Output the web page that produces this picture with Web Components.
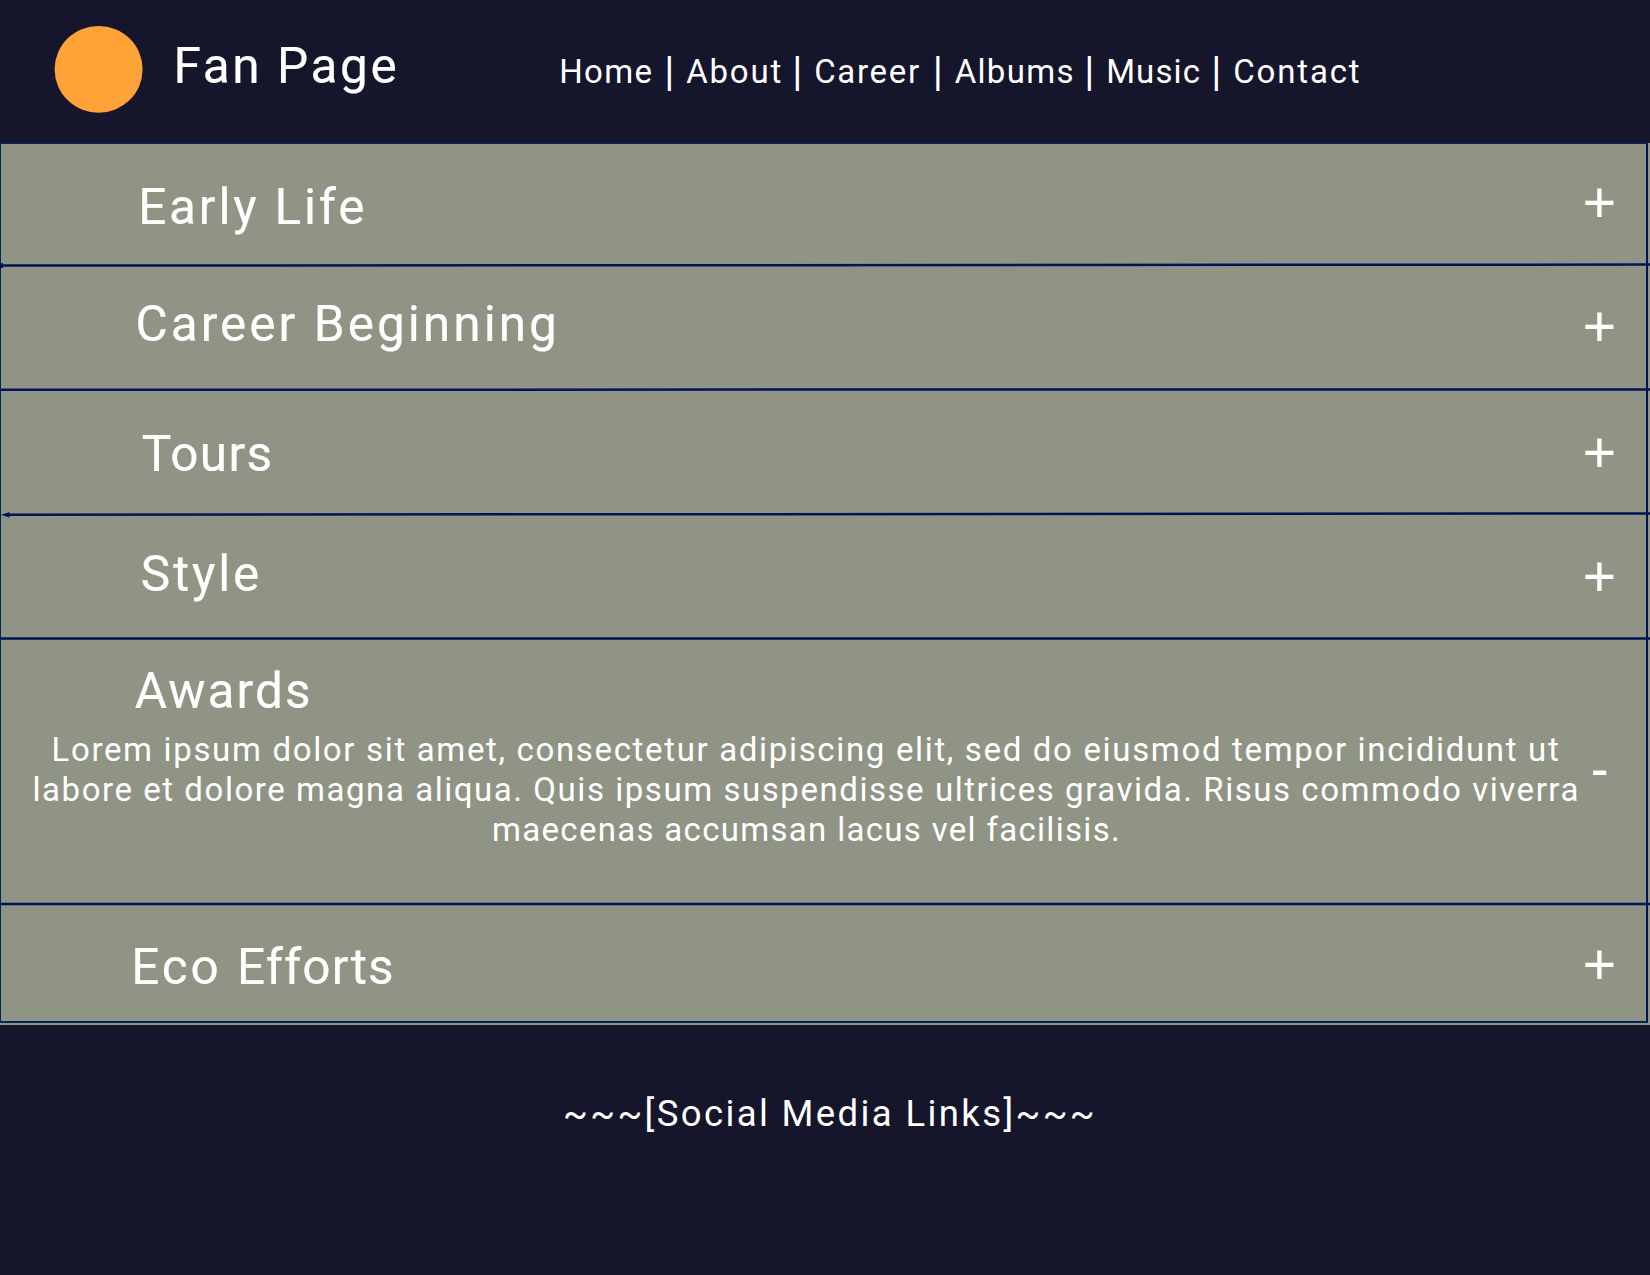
<!DOCTYPE html>
<html lang="en">
<head>
<meta charset="utf-8">
<title>Fan Page</title>
<style>
  body { margin: 0; background: #15152b; }
</style>
</head>
<body>
<fan-page></fan-page>
<script>
const define = (name, html, init) => customElements.define(name, class extends HTMLElement {
  connectedCallback() {
    if (this.shadowRoot) return;
    const t = document.createElement('template');
    t.innerHTML = html;
    this.attachShadow({ mode: 'open' }).append(t.content.cloneNode(true));
    if (init) init.call(this, this.shadowRoot);
  }
});

define('site-header', `
<style>
  :host { display: flex; align-items: flex-start; height: 143px; box-sizing: border-box; white-space: nowrap; }
  svg { width: 90px; height: 88px; margin: 25px 0 0 53px; flex: none; }
  .brand { margin: 37px 0 0 30.5px; width: 385.7px; font-size: 49.5px; line-height: 58px; letter-spacing: 2.6px; flex: none; -webkit-text-stroke: 0.2px #fff; }
  nav { display: flex; margin-top: 51px; font-size: 33px; line-height: 40px; }
</style>
<svg viewBox="0 0 90 88"><ellipse cx="45.6" cy="44.3" rx="44" ry="43.4" fill="#ffa238"/></svg>
<div class="brand"><slot name="brand"></slot></div>
<nav><slot></slot></nav>`);

define('nav-item', `
<style>
  :host { display: flex; justify-content: space-between; align-items: baseline; box-sizing: border-box; width: var(--w); padding-right: 12px; letter-spacing: var(--ls); }
  :host([last]) i { width: 0; overflow: hidden; }
  i { font: 37px/40px "Liberation Sans", sans-serif; letter-spacing: 0; width: 10px; text-align: center; }
</style>
<span><slot></slot></span><i></i>`, function (root) {
  root.querySelector('i').textContent = this.hasAttribute('last') ? '\u00a0' : '|';
  if (this.hasAttribute('last')) root.querySelector('i').style.overflow = 'visible';
});

/* Divider between rows: y1 / y2 give the line a slight slope, tip picks the left end. */
define('row-divider', `
<style>
  :host { display: block; height: 8px; margin-right: -5px; }
  svg { display: block; width: 1650px; height: 8px; overflow: visible; }
</style>
<svg viewBox="0 0 1650 8"></svg>`, function (root) {
  const a = this.getAttribute('y1'), b = this.getAttribute('y2'), tip = this.getAttribute('tip');
  root.querySelector('svg').innerHTML =
    `<line x1="${tip === 'arrow' ? 6 : 0}" y1="${a}" x2="1650" y2="${b}" stroke="#001457" stroke-width="2.5"/>` +
    (tip === 'arrow' ? `<path d="M0 ${a}L9 ${+a - 2.9}L7.5 ${a}L9 ${+a + 2.9}Z" fill="#001457"/>` : '') +
    (tip === 'dot' ? `<rect x="-1" y="${+a - 2.4}" width="3" height="4.8" fill="#001457"/>` : '');
});

define('accordion-row', `
<style>
  :host { display: flex; justify-content: space-between; box-sizing: border-box; height: var(--h); white-space: nowrap; }
  .main { flex: 1; min-width: 0; }
  h2 { margin: var(--ty) 0 0 var(--tx); font-weight: 400; font-size: 49.5px; line-height: 58px; letter-spacing: var(--ls); -webkit-text-stroke: 0.2px #fff; }
  .sign { flex: none; width: 60px; margin: var(--sy) 16.5px 0 0; text-align: center; font: 57px/60px "Liberation Sans", sans-serif; height: 60px; -webkit-text-stroke: 0.2px #fff; }
  :host([open]) .sign { font-size: 53px; }
</style>
<div class="main"><h2><slot name="title"></slot></h2><slot></slot></div>
<div class="sign"></div>`, function (root) {
  root.querySelector('.sign').textContent = this.hasAttribute('open') ? '-' : '+';
});

define('row-text', `
<style>
  :host { display: block; margin-top: 10px; font-size: 33px; line-height: 40px; }
  div { display: flex; }
  .a { padding-left: 50.5px; letter-spacing: 1.66px; }
  .b { padding-left: 31.5px; letter-spacing: 1.55px; }
  .c { padding-left: 491px; letter-spacing: 1.31px; }
</style>
<div class="a"><slot name="a"></slot></div>
<div class="b"><slot name="b"></slot></div>
<div class="c"><slot name="c"></slot></div>`);

define('accordion-panel', `
<style>
  :host { display: block; height: 882px; background: #909484; }
  .frame { box-sizing: border-box; width: 1648px; height: 880px; border: solid #00255f; border-width: 1px 2px 2px 1px; border-right-color: #001457; }
</style>
<div class="frame"><slot></slot></div>`);

define('site-footer', `
<style>
  :host { display: flex; height: 250px; padding: 67px 0 0 563px; box-sizing: border-box; font-size: 36.5px; line-height: 44px; letter-spacing: 2.38px; white-space: nowrap; }
</style>
<slot></slot>`);

define('fan-page', `
<style>
  :host { display: block; width: 1650px; height: 1275px; overflow: hidden; background: #15152b; color: #fff; font-family: Roboto, "Liberation Sans", sans-serif; }
</style>
<site-header><span slot="brand">Fan Page</span><nav-item style="--w:127px;--ls:1.3px">Home</nav-item><nav-item style="--w:128px;--ls:1.8px">About</nav-item><nav-item style="--w:140.5px;--ls:1.7px">Career</nav-item><nav-item style="--w:151.5px;--ls:1.3px">Albums</nav-item><nav-item style="--w:127px;--ls:1.1px">Music</nav-item><nav-item last style="--w:150px;--ls:1.85px">Contact</nav-item></site-header>
<accordion-panel>
  <accordion-row style="--h:117px;--ty:34px;--tx:137.2px;--ls:2.8px;--sy:28px"><span slot="title">Early Life</span></accordion-row>
  <row-divider y1="4.6" y2="3.6" tip="dot"></row-divider>
  <accordion-row style="--h:117px;--ty:26px;--tx:134.4px;--ls:3.05px;--sy:27px"><span slot="title">Career Beginning</span></accordion-row>
  <row-divider y1="3.8" y2="3.4"></row-divider>
  <accordion-row style="--h:116px;--ty:31px;--tx:140.7px;--ls:1.37px;--sy:28px"><span slot="title">Tours</span></accordion-row>
  <row-divider y1="4.8" y2="3.4" tip="arrow"></row-divider>
  <accordion-row style="--h:116px;--ty:27px;--tx:139.8px;--ls:2.8px;--sy:28px"><span slot="title">Style</span></accordion-row>
  <row-divider y1="4.5" y2="4.5"></row-divider>
  <accordion-row open style="--h:258px;--ty:20px;--tx:133.7px;--ls:2.1px;--sy:97px"><span slot="title">Awards</span>
    <row-text><span slot="a">Lorem ipsum dolor sit amet, consectetur adipiscing elit, sed do eiusmod tempor incididunt ut</span><span slot="b">labore et dolore magna aliqua. Quis ipsum suspendisse ultrices gravida. Risus commodo viverra</span><span slot="c">maecenas accumsan lacus vel facilisis.</span></row-text>
  </accordion-row>
  <row-divider y1="4" y2="3.9"></row-divider>
  <accordion-row style="--h:113px;--ty:30px;--tx:130.2px;--ls:2.9px;--sy:26px"><span slot="title">Eco <span style="letter-spacing:1.1px">Efforts</span></span></accordion-row>
</accordion-panel>
<site-footer>~~~[Social Media Links]~~~</site-footer>`);
</script>
</body>
</html>
